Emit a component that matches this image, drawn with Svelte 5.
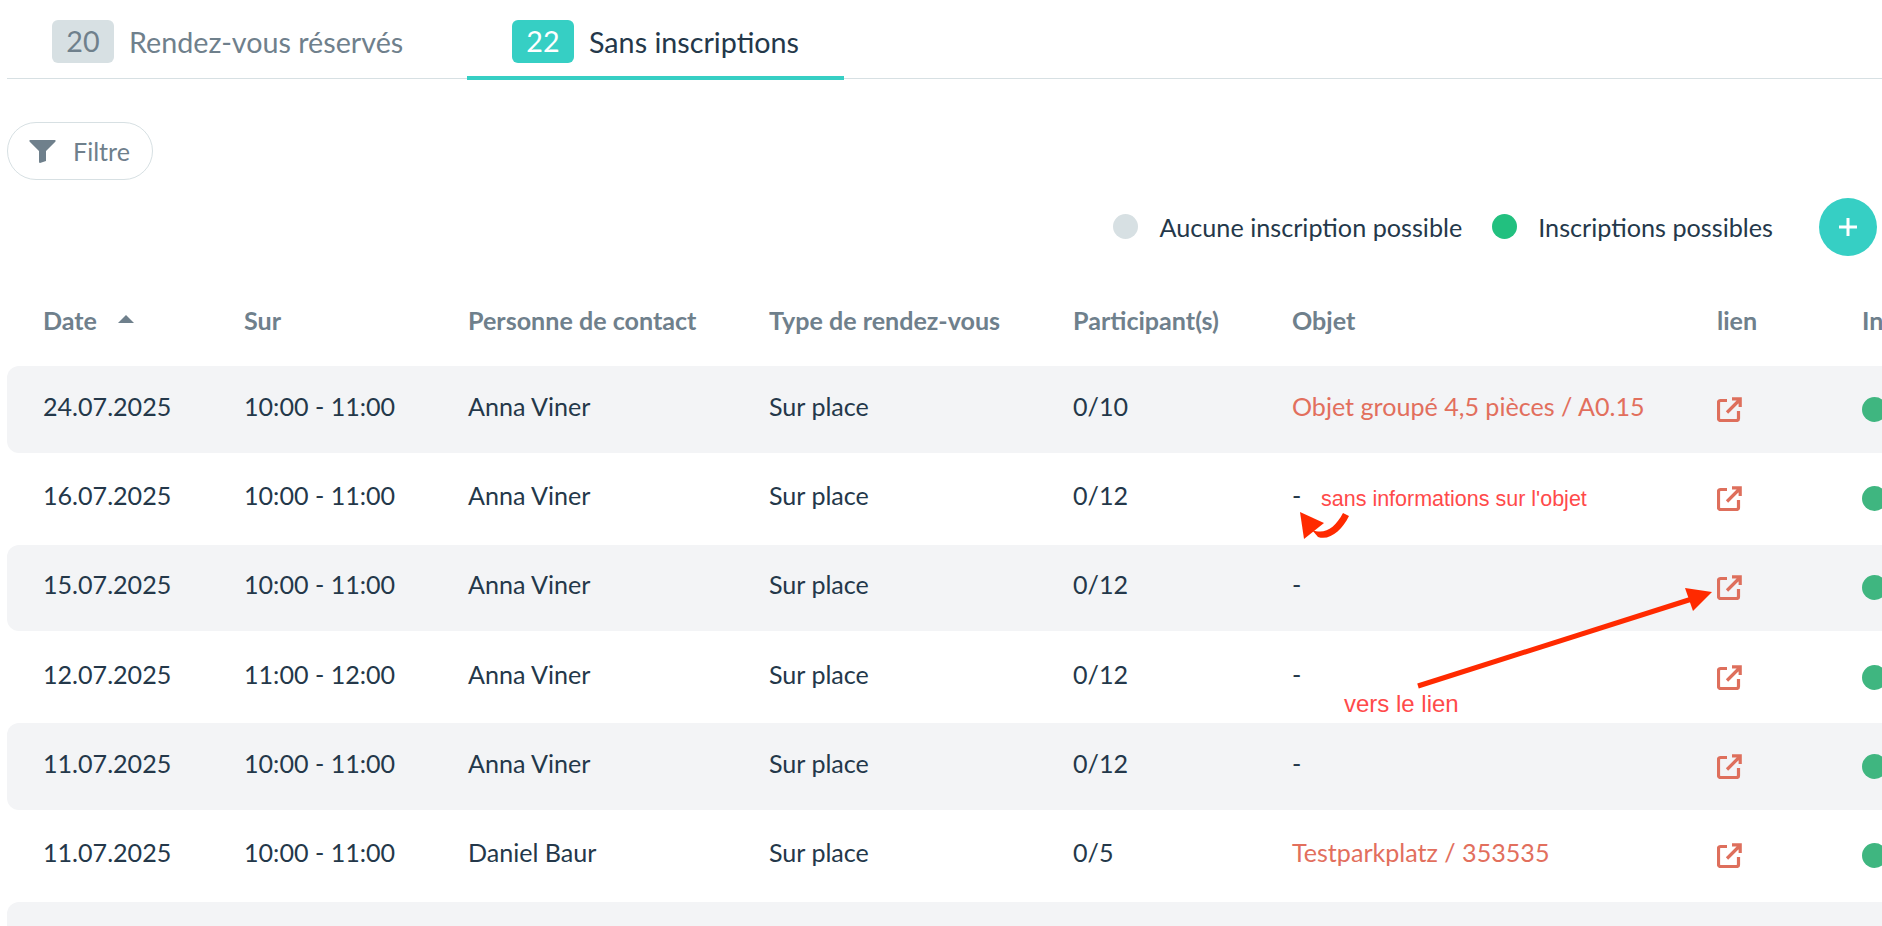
<script>
	const rows = [
		{ date: '24.07.2025', time: '10:00 - 11:00', contact: 'Anna Viner', type: 'Sur place', part: '0/10', obj: 'Objet groupé 4,5 pièces / A0.15' },
		{ date: '16.07.2025', time: '10:00 - 11:00', contact: 'Anna Viner', type: 'Sur place', part: '0/12', obj: '-' },
		{ date: '15.07.2025', time: '10:00 - 11:00', contact: 'Anna Viner', type: 'Sur place', part: '0/12', obj: '-' },
		{ date: '12.07.2025', time: '11:00 - 12:00', contact: 'Anna Viner', type: 'Sur place', part: '0/12', obj: '-' },
		{ date: '11.07.2025', time: '10:00 - 11:00', contact: 'Anna Viner', type: 'Sur place', part: '0/12', obj: '-' },
		{ date: '11.07.2025', time: '10:00 - 11:00', contact: 'Daniel Baur', type: 'Sur place', part: '0/5', obj: 'Testparkplatz / 353535' }
	];
</script>

<div class="page">
	<nav class="tabs">
		<div class="tab first">
			<span class="badge">20</span>
			<span>Rendez-vous réservés</span>
		</div>
		<div class="tab active">
			<span class="badge">22</span>
			<span>Sans inscriptions</span>
		</div>
	</nav>

	<button class="filter">
		<svg viewBox="0 0 27 23" width="27" height="23" aria-hidden="true">
			<path d="M1 0 H26 Q27 0 26.5 1.5 L17 11 V21 L11 23 Q10 23 10 21.5 V11 L0.5 1.5 Q0 0 1 0 Z" />
		</svg>
		Filtre
	</button>

	<div class="legend">
		<span class="dot grey"></span>
		<span class="legend-text">Aucune inscription possible</span>
		<span class="dot green"></span>
		<span class="legend-text last">Inscriptions possibles</span>
		<button class="add" aria-label="Ajouter">
			<svg viewBox="0 0 20 20" width="20" height="20" aria-hidden="true">
				<path d="M10 1 V19 M1 10 H19" />
			</svg>
		</button>
	</div>

	<div class="row head">
		<div class="date-head">Date <span class="sort"></span></div>
		<div>Sur</div>
		<div>Personne de contact</div>
		<div>Type de rendez-vous</div>
		<div class="lig">Participant(s)</div>
		<div>Objet</div>
		<div>lien</div>
		<div>Inscriptions</div>
	</div>

	{#each rows as r}
		<div class="row body">
			<div class="cell">{r.date}</div>
			<div class="cell">{r.time}</div>
			<div class="cell">{r.contact}</div>
			<div class="cell">{r.type}</div>
			<div class="cell">{r.part}</div>
			<div class="cell" class:link={r.obj !== '-'}>{r.obj}</div>
			<div>
				<svg class="ext" viewBox="0 0 25 25" width="25" height="25" aria-hidden="true">
					<path d="M10 3.5 H3.5 Q1.5 3.5 1.5 5.5 V21.5 Q1.5 23.5 3.5 23.5 H19.5 Q21.5 23.5 21.5 21.5 V14" />
					<path d="M10 15.5 L22.5 3 M15 1.8 H23.2 V10" />
				</svg>
			</div>
			<div><span class="status"></span></div>
		</div>
	{/each}
	<div class="row body"></div>

	<svg class="notes" viewBox="0 0 1882 926" width="1882" height="926" aria-hidden="true">
		<path class="shaft" d="M1418 686 L1695 598" />
		<path class="head-fill" d="M1712 592 L1685 588 L1693 611 Z" />
		<path class="head-fill" d="M1343 513 L1349 516 C1342 530 1330 541 1318 537 L1312 530 C1325 535 1335 528 1343 513 Z" />
		<path class="head-fill" d="M1300 512 L1304 539 L1324 523 Z" />
	</svg>
	<span class="note note-obj">sans informations sur l'objet</span>
	<span class="note note-link">vers le lien</span>
</div>

<style>
	:global(body) {
		margin: 0;
		background: #fff;
		overflow: hidden;
	}

	.page {
		position: relative;
		width: 1882px;
		height: 926px;
		overflow: hidden;
		font-family: Lato, "Open Sans", sans-serif;
		font-size: 25.1px;
		color: #24384a;
	}

	.tabs {
		display: flex;
		margin-left: 7px;
		border-bottom: 1px solid #d7e0e3;
		box-sizing: border-box;
		height: 79px;
		font-feature-settings: "liga", "dlig";
	}

	.tab {
		display: flex;
		align-items: flex-start;
		gap: 15px;
		padding-top: 20px;
		font-size: 28.7px;
		height: 60px;
		color: #6f808c;
	}

	.tab span:last-child {
		line-height: 44px;
	}

	.first {
		width: 460px;
		padding-left: 45px;
		box-sizing: border-box;
	}

	.active {
		width: 377px;
		padding-left: 45px;
		box-sizing: border-box;
		color: #24384a;
		border-bottom: 4px solid #36cfc4;
		height: 80px;
	}

	.badge {
		width: 62px;
		height: 43px;
		border-radius: 6px;
		background: #d7e0e3;
		text-align: center;
		line-height: 43px;
	}

	.active .badge {
		background: #36cfc4;
		color: #fff;
	}

	.filter {
		display: flex;
		align-items: center;
		gap: 17px;
		margin: 43px 0 0 7px;
		width: 146px;
		height: 58px;
		padding: 0 0 0 21px;
		box-sizing: border-box;
		border: 1px solid #d7e0e3;
		border-radius: 29px;
		background: #fff;
		font: inherit;
		color: #6f808c;
	}

	.filter path {
		fill: #6f808c;
	}

	.legend {
		display: flex;
		align-items: center;
		justify-content: flex-end;
		height: 57px;
		margin-top: 18px;
		padding-right: 5px;
		font-size: 25.2px;
		font-feature-settings: "liga", "dlig";
	}

	.dot {
		width: 25px;
		height: 25px;
		border-radius: 50%;
		margin-right: 21px;
	}

	.grey {
		background: #d7e0e3;
	}

	.green {
		background: #22c07f;
	}

	.legend-text {
		margin-right: 30px;
	}

	.legend-text.last {
		margin-right: 46px;
	}

	.add {
		width: 58px;
		height: 58px;
		padding: 0;
		border: 0;
		border-radius: 50%;
		background: #36cfc4;
		display: flex;
		align-items: center;
		justify-content: center;
	}

	.add path {
		stroke: #fff;
		stroke-width: 3;
		fill: none;
	}

	.row {
		display: grid;
		grid-template-columns: 201px 224px 301px 304px 219px 425px 145px 200px;
		align-items: center;
		margin-left: 7px;
		padding-left: 36px;
	}

	.head {
		height: 111px;
		padding-top: 19px;
		box-sizing: border-box;
		font-weight: 700;
		color: #6f808c;
	}

	.lig {
		font-feature-settings: "liga", "dlig";
	}

	.date-head {
		display: flex;
		align-items: center;
	}

	.sort {
		width: 0;
		height: 0;
		margin: -2px 0 0 21px;
		border-left: 8px solid transparent;
		border-right: 8px solid transparent;
		border-bottom: 8px solid #6f808c;
	}

	.body {
		height: 92px;
	}

	.body:nth-child(odd) {
		background: #f3f4f6;
		height: 86.67px;
		border-radius: 12px 0 0 12px;
	}

	.cell {
		padding-bottom: 7px;
	}

	.link {
		color: #e26f5d;
	}

	.ext {
		display: block;
	}

	.ext path {
		fill: none;
		stroke: #de6f5c;
		stroke-width: 3.2;
	}

	.status {
		display: block;
		width: 25px;
		height: 25px;
		border-radius: 50%;
		background: #3fb680;
	}

	.notes {
		position: absolute;
		left: 0;
		top: 0;
	}

	.shaft {
		stroke: #ff2a00;
		stroke-width: 5;
		fill: none;
	}

	.head-fill {
		fill: #ff2a00;
	}

	.note {
		position: absolute;
		font-family: "Liberation Sans", Arial, sans-serif;
		color: #ff4a4a;
		white-space: nowrap;
	}

	.note-obj {
		left: 1321px;
		top: 487px;
		font-size: 21.5px;
	}

	.note-link {
		left: 1344px;
		top: 690px;
		font-size: 24px;
	}
</style>
